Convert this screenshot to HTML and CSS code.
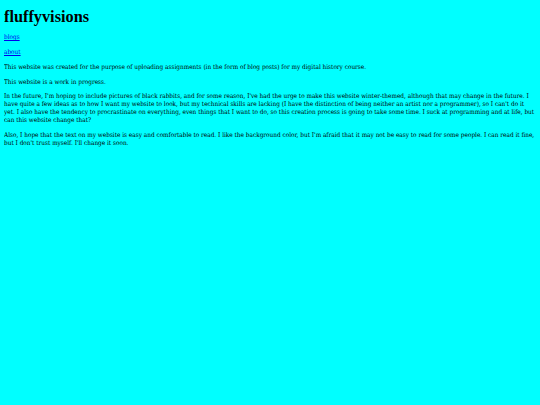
FILE: index.html
```html
<!DOCTYPE html>
<html>
<head>
<meta charset="utf-8">
<link rel="stylesheet" href="styles.css">
</head>
<body class="page">
<h1 class="title">fluffyvisions</h1>
<p class="nav"><a href="#">blogs</a></p>
<p class="nav"><a href="#">about</a></p>
<p class="text">This website was created for the purpose of uploading assignments (in the form of blog posts) for my digital history course.</p>
<p class="text">This website is a work in progress.</p>
<p class="text">In the future, I'm hoping to include pictures of black rabbits, and for some reason, I've had the urge to make this website winter-themed, although that may change in the future. I have quite a few ideas as to how I want my website to look, but my technical skills are lacking (I have the distinction of being neither an artist nor a programmer), so I can't do it yet. I also have the tendency to procrastinate on everything, even things that I want to do, so this creation process is going to take some time. I suck at programming and at life, but can this website change that?</p>
<p class="text">Also, I hope that the text on my website is easy and comfortable to read. I like the background color, but I'm afraid that it may not be easy to read for some people. I can read it fine, but I don't trust myself. I'll change it soon.</p>
</body>
</html>
```
FILE: styles.css
```css
html { background: #00ffff; }
.page {
  margin: 4px;
  font-family: "DejaVu Serif Condensed", "DejaVu Serif", serif;
  font-stretch: condensed;
  font-size: 6.42px;
  line-height: 8px;
  color: #000;
  background: #00ffff;
}
.title {
  font-family: "Liberation Serif", serif;
  font-stretch: normal;
  font-size: 16.3px;
  line-height: 19px;
  margin: 3px 0 7px;
  font-weight: bold;
}
.nav { margin: 7px 0; }
.nav a { color: #0000ee; }
.text { margin: 6.5px 0; }
```
